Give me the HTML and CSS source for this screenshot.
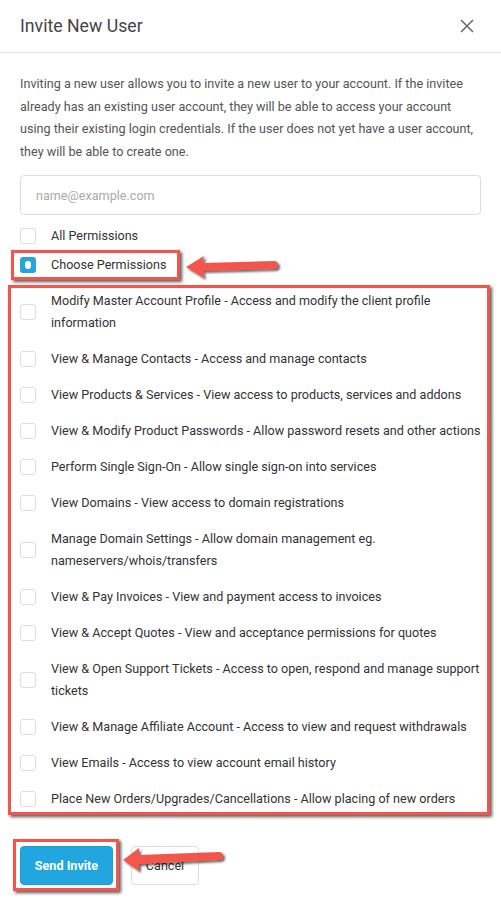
FILE: index.html
```html
<!DOCTYPE html>
<html lang="en">
<head>
    <meta charset="UTF-8">
    <meta name="viewport" content="width=device-width, initial-scale=1.0">
    <title>Invite New User</title>
    <link rel="stylesheet" href="styles.css">
</head>
<body>
    <div class="modal">
        <div class="modal-header">
            <h3 class="modal-title">Invite New User</h3>
            <button class="close-btn" aria-label="Close">
                <svg width="14" height="14" viewBox="0 0 14 14">
                    <path d="M1 1 L13 13 M13 1 L1 13" stroke="#666" stroke-width="1.5" fill="none"/>
                </svg>
            </button>
        </div>

        <div class="modal-body">
            <p class="intro">Inviting a new user allows you to invite a new user to your account. If the invitee already has an existing user account, they will be able to access your account using their existing login credentials. If the user does not yet have a user account, they will be able to create one.</p>

            <input type="text" class="email-input" placeholder="name@example.com">

            <div class="check-row">
                <span class="check"></span>
                <span>All Permissions</span>
            </div>
            <div class="check-row highlight choose-box">
                <span class="check checked"></span>
                <span>Choose Permissions</span>
            </div>

            <div class="highlight perm-box">
                <div class="check-row"><span class="check"></span><span>Modify Master Account Profile - Access and modify the client profile information</span></div>
                <div class="check-row"><span class="check"></span><span>View &amp; Manage Contacts - Access and manage contacts</span></div>
                <div class="check-row"><span class="check"></span><span>View Products &amp; Services - View access to products, services and addons</span></div>
                <div class="check-row"><span class="check"></span><span>View &amp; Modify Product Passwords - Allow password resets and other actions</span></div>
                <div class="check-row"><span class="check"></span><span>Perform Single Sign-On - Allow single sign-on into services</span></div>
                <div class="check-row"><span class="check"></span><span>View Domains - View access to domain registrations</span></div>
                <div class="check-row"><span class="check"></span><span>Manage Domain Settings - Allow domain management eg. nameservers/whois/transfers</span></div>
                <div class="check-row"><span class="check"></span><span>View &amp; Pay Invoices - View and payment access to invoices</span></div>
                <div class="check-row"><span class="check"></span><span>View &amp; Accept Quotes - View and acceptance permissions for quotes</span></div>
                <div class="check-row"><span class="check"></span><span>View &amp; Open Support Tickets - Access to open, respond and manage support tickets</span></div>
                <div class="check-row"><span class="check"></span><span>View &amp; Manage Affiliate Account - Access to view and request withdrawals</span></div>
                <div class="check-row"><span class="check"></span><span>View Emails - Access to view account email history</span></div>
                <div class="check-row"><span class="check"></span><span>Place New Orders/Upgrades/Cancellations - Allow placing of new orders</span></div>
            </div>
        </div>

        <div class="modal-footer">
            <div class="highlight send-box">
                <button class="btn btn-primary">Send Invite</button>
            </div>
            <button class="btn btn-default">Cancel</button>
        </div>

        <!-- annotation arrows -->
        <svg class="arrow arrow-choose" width="110" height="36" viewBox="0 0 110 36">
            <defs>
                <filter id="shadow1" x="-20%" y="-40%" width="140%" height="180%">
                    <feDropShadow dx="2" dy="2" stdDeviation="1.2" flood-color="#000" flood-opacity="0.6"/>
                </filter>
            </defs>
            <g filter="url(#shadow1)">
                <path d="M4 16 L22 5 L21 12 L92 10 Q96 10 96 14 Q96 18 92 18 L21 20 L22 27 Z" fill="#f4544c"/>
            </g>
        </svg>
        <svg class="arrow arrow-send" width="114" height="36" viewBox="0 0 114 36">
            <defs>
                <filter id="shadow2" x="-20%" y="-40%" width="140%" height="180%">
                    <feDropShadow dx="2" dy="2" stdDeviation="1.2" flood-color="#000" flood-opacity="0.6"/>
                </filter>
            </defs>
            <g filter="url(#shadow2)">
                <path d="M4 18 L20 6 L20 13 L100 10 Q104 10 104 14 Q104 18 100 18 L20 22 L20 29 Z" fill="#f4544c"/>
            </g>
        </svg>
    </div>
</body>
</html>
```

FILE: styles.css
```css
body {
    margin: 0;
    font-family: Roboto, "Liberation Sans", Arial, sans-serif;
    color: #333;
    background: #fff;
}

.modal {
    position: relative;
    width: 501px;
}

.modal-header {
    display: flex;
    align-items: center;
    justify-content: space-between;
    height: 53px;
    padding: 0 20px;
    border-bottom: 1px solid #e5e5e5;
    box-sizing: border-box;
}

.modal-title {
    margin: 0;
    font-size: 17.7px;
    font-weight: 400;
    color: #444;
}

.close-btn {
    border: none;
    background: none;
    padding: 0;
    margin-right: 7px;
    display: flex;
}

.modal-body {
    padding: 20px 20px 0 20px;
}

.intro {
    margin: 0 0 12px 0;
    font-size: 12.6px;
    line-height: 22.5px;
    color: #555;
}

.email-input {
    display: block;
    box-sizing: border-box;
    width: 100%;
    height: 40px;
    padding: 0 15px;
    border: 1px solid #ddd;
    border-radius: 4px;
    font-family: inherit;
    font-size: 12.6px;
    color: #333;
    margin-bottom: 10px;
}

.email-input::placeholder {
    color: #aaa;
}

.check-row {
    display: flex;
    align-items: center;
    gap: 15px;
    font-size: 12.6px;
    line-height: 22px;
    color: #333;
}

.check {
    flex: none;
    box-sizing: border-box;
    width: 16px;
    height: 16px;
    border: 1px solid #ddd;
    border-radius: 3px;
    background: #fff;
}

.check.checked {
    position: relative;
    border: none;
    background: #27a3dd;
}

.check.checked::after {
    content: "";
    position: absolute;
    left: 5px;
    top: 4px;
    width: 6px;
    height: 8px;
    border-radius: 3px;
    background: #fff;
}

/* red annotation boxes */
.highlight {
    border: 3px solid #f4544c;
    box-shadow: 2px 2px 3px rgba(0, 0, 0, 0.65);
}

.choose-box {
    width: fit-content;
    margin: 3px 0 0 -9px;
    padding: 1px 11px 1px 6px;
}

.perm-box {
    margin: 5px -9px 0 -12px;
    padding: 2px 6px 2px 9px;
    display: flex;
    flex-direction: column;
    gap: 14px;
}

.modal-footer {
    display: flex;
    align-items: center;
    gap: 12px;
    padding: 24px 20px 20px 13px;
}

.send-box {
    padding: 4px 3px 3px 4px;
    display: flex;
}

.btn {
    height: 39px;
    border-radius: 4px;
    font-family: inherit;
    font-size: 12.6px;
    padding: 0;
}

.btn-primary {
    width: 93px;
    background: #22a6e0;
    border: 1px solid #1e9bd3;
    color: #fff;
    font-weight: 700;
}

.btn-default {
    width: 68px;
    background: #fff;
    border: 1px solid #ddd;
    color: #333;
}

.arrow {
    position: absolute;
}

.arrow-choose {
    left: 182px;
    top: 251px;
}

.arrow-send {
    left: 119px;
    top: 842px;
}
```
